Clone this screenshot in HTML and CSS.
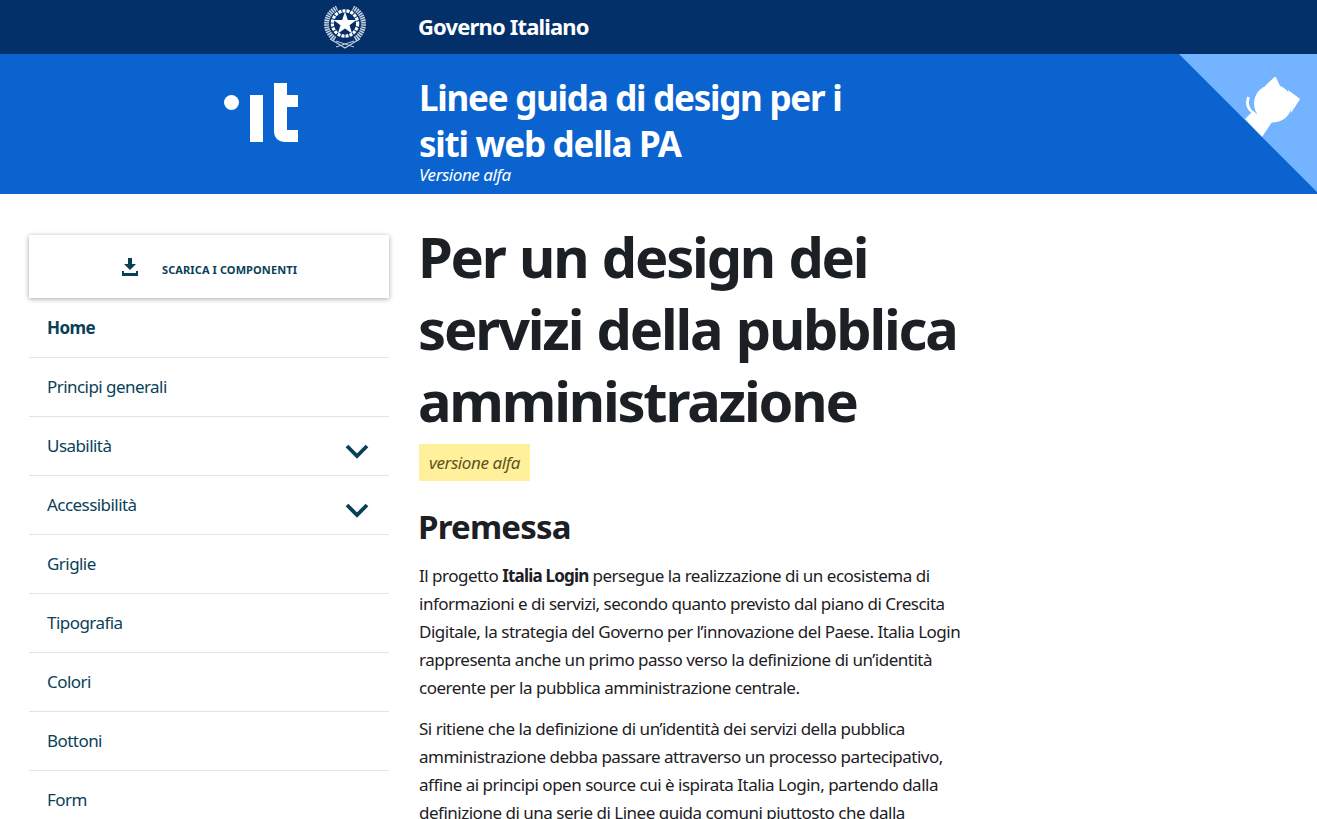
FILE: index.html
```html
<!DOCTYPE html>
<html lang="it">
<head>
    <meta charset="UTF-8" />
    <meta name="viewport" content="width=device-width,initial-scale=1.0" />
    <title>Linee guida di design per i siti web della PA</title>
    <link rel="stylesheet" href="styles.css">
</head>
<body>

    <div class="gov-bar">
        <div class="side-col emblem-col">
            <svg class="emblem" viewBox="0 0 42 46" width="42" height="46">
                <!-- wreath -->
                <g fill="none" stroke="#c3cfde">
                    <path d="M11 36 A17.500 17.500 0 0 1 13 5" stroke-width="5" stroke-dasharray="1.600 .7"/>
                    <path d="M31 36 A17.500 17.500 0 0 0 29 5" stroke-width="5" stroke-dasharray="1.600 .7"/>
                    <path d="M6 36 Q15 41 21 45 Q27 41 36 36" stroke-width="1.300"/>
                    <path d="M12 44 L30 38 M30 44 L12 38" stroke-width="1"/>
                </g>
                <g transform="translate(0 -1.500)">
                    <circle cx="21" cy="22" r="12.500" fill="none" stroke="#fff" stroke-width="3.500" stroke-dasharray="3 1"/>
                    <circle cx="21" cy="22" r="11" fill="#04306a"/>
                    <polygon points="21,10 23.800,18.500 32.500,18.500 25.500,23.800 28.100,32 21,27 13.900,32 16.500,23.800 9.500,18.500 18.200,18.500" fill="#fff"/>
                </g>
            </svg>
        </div>
        <div class="gov-title">Governo Italiano</div>
    </div>

    <div class="site-bar">
        <div class="side-col logo-col">
            <span class="logo-dot"></span>
            <span class="logo-i"></span>
            <span class="logo-t"></span>
        </div>
        <div class="site-title">
            <h2>Linee guida di design per i<br>siti web della PA</h2>
            <em>Versione alfa</em>
        </div>
        <a class="ribbon" href="#">
            <svg viewBox="1179 54 138 138" width="138" height="138">
                <g fill="#fff">
                    <circle cx="1273" cy="103.500" r="19"/>
                    <path d="M1265 86 L1274.500 77 Q1275.500 76.500 1276 77.500 L1281 88 Z"/>
                    <path d="M1288 90 L1299.500 98.500 Q1300.500 99.500 1299.500 100 L1291 113 Z"/>
                    <path d="M1245 119 L1252 112 L1268 118 L1272 122 L1262 137 Z"/>
                </g>
                <path d="M1255 114 C1248 110 1246 104 1248.500 97" fill="none" stroke="#fff" stroke-width="2.600"/>
            </svg>
        </a>
    </div>

    <div class="page">
        <aside class="sidebar">
            <a class="download" href="#">
                <svg viewBox="0 0 18 18" width="18" height="18">
                    <path fill="#0a3f58" d="M7 0h4v6h4l-6 6-6-6h4zM1 13h2v2h12v-2h2v5H1z"/>
                </svg>
                <span>SCARICA I COMPONENTI</span>
            </a>
            <ul class="nav">
                <li class="active">Home</li>
                <li>Principi generali</li>
                <li class="has-sub">Usabilità
                    <svg viewBox="0 0 24 16" width="24" height="16"><path d="M2 3l10 10L22 3" fill="none" stroke="#0a3f58" stroke-width="3.800"/></svg>
                </li>
                <li class="has-sub">Accessibilità
                    <svg viewBox="0 0 24 16" width="24" height="16"><path d="M2 3l10 10L22 3" fill="none" stroke="#0a3f58" stroke-width="3.800"/></svg>
                </li>
                <li>Griglie</li>
                <li>Tipografia</li>
                <li>Colori</li>
                <li>Bottoni</li>
                <li>Form</li>
            </ul>
        </aside>

        <main class="content">
            <h1>Per un design dei<br>servizi della pubblica<br>amministrazione</h1>
            <div class="badge">versione alfa</div>
            <h2>Premessa</h2>
            <p>Il progetto <strong>Italia Login</strong> persegue la realizzazione di un ecosistema di<br>informazioni e di servizi, secondo quanto previsto dal piano di Crescita<br>Digitale, la strategia del Governo per l’innovazione del Paese. Italia Login<br>rappresenta anche un primo passo verso la definizione di un’identità<br>coerente per la pubblica amministrazione centrale.</p>
            <p>Si ritiene che la definizione di un’identità dei servizi della pubblica<br>amministrazione debba passare attraverso un processo partecipativo,<br>affine ai principi open source cui è ispirata Italia Login, partendo dalla<br>definizione di una serie di Linee guida comuni piuttosto che dalla</p>
        </main>
    </div>

</body>
</html>
```

FILE: styles.css
```css
html, body {
    height: 100%;
    overflow: hidden;
}

body {
    margin: 0;
    font-family: "Noto Sans", "Open Sans", sans-serif;
    color: #1c2024;
    background: #fff;
}

.side-col {
    width: 419px;
    flex: none;
}

.gov-bar {
    display: flex;
    align-items: center;
    height: 54px;
    background: #04306a;
    overflow: hidden;
}

.emblem-col {
    display: flex;
    padding-left: 324px;
    width: 95px;
}

.emblem {
    margin-top: -2px;
}

.gov-title {
    margin: -2px 0 0 -1px;
    color: #fff;
    font-size: 22px;
    font-weight: 700;
    letter-spacing: -.85px;
}

.site-bar {
    display: flex;
    position: relative;
    height: 140px;
    background: #0b63d0;
    overflow: hidden;
}

.logo-col {
    display: flex;
    align-items: flex-start;
    padding: 29px 0 0 224px;
    width: 195px;
}

.logo-dot {
    width: 15px;
    height: 15px;
    margin: 12px 11px 0 0;
    border-radius: 50%;
    background: #fff;
}

.logo-i {
    width: 13px;
    height: 47px;
    margin: 12px 11px 0 0;
    background: #fff;
}

.logo-t {
    position: relative;
    width: 24px;
    height: 47px;
    border-left: 13px solid #fff;
    box-sizing: border-box;
}

.logo-t::before, .logo-t::after {
    content: "";
    position: absolute;
    background: #fff;
}

.logo-t::before {
    top: 12px;
    left: 0;
    width: 11px;
    height: 12px;
}

.logo-t::after {
    top: 47px;
    left: -13px;
    width: 24px;
    height: 12px;
    border-bottom-left-radius: 10px;
}

.site-title {
    padding-top: 21px;
    color: #fff;
}

.site-title h2 {
    margin: 0;
    font-size: 35px;
    line-height: 46px;
    font-weight: 700;
    letter-spacing: -1.25px;
}

.site-title em {
    display: block;
    font-size: 17px;
    line-height: 16px;
    letter-spacing: -.45px;
}

.ribbon {
    position: absolute;
    top: 0;
    right: 0;
    width: 138px;
    height: 138px;
    background: #74b3ff;
    clip-path: polygon(0 0, 100% 0, 100% 100%);
}

.ribbon svg {
    display: block;
}

.page {
    display: flex;
    gap: 30px;
    padding: 41px 0 0 29px;
}

.sidebar {
    width: 360px;
    flex: none;
}

.download {
    display: flex;
    align-items: center;
    justify-content: center;
    gap: 23px;
    height: 63px;
    color: #0a3f58;
    text-decoration: none;
    font-size: 11px;
    font-weight: 700;
    letter-spacing: .1px;
    box-shadow: 0 1px 5px rgba(0,0,0,.35);
}

.download span {
    margin-top: 5px;
}

.nav {
    list-style: none;
    margin: 1px 0 0;
    padding: 0;
}

.nav li {
    display: flex;
    align-items: center;
    justify-content: space-between;
    height: 56px;
    padding: 0 20px 2px 18px;
    border-bottom: 1px solid #e3e4e6;
    color: #0a3f58;
    font-size: 17px;
    letter-spacing: -.55px;
}

.nav li.active {
    font-weight: 700;
}

.nav li svg {
    margin-top: 12px;
}

.content {
    width: 545px;
    margin-top: -15px;
}

.content h1 {
    margin: 0 0 0 -1px;
    font-size: 56px;
    line-height: 72px;
    font-weight: 700;
    letter-spacing: -2.2px;
    word-spacing: 2px;
    white-space: nowrap;
}

.badge {
    width: fit-content;
    margin-top: 8px;
    padding: 0 10px;
    line-height: 37px;
    background: #fff09b;
    color: #5f5420;
    font-style: italic;
    font-size: 17px;
    letter-spacing: -.42px;
}

.content h2 {
    margin: 23px 0 12px -1px;
    font-size: 33px;
    line-height: 46px;
    font-weight: 700;
    letter-spacing: -.8px;
}

.content p {
    margin: 0 0 13px;
    font-size: 17px;
    line-height: 28px;
    letter-spacing: -.49px;
    white-space: nowrap;
}

.content p strong {
    letter-spacing: -.8px;
}
```
